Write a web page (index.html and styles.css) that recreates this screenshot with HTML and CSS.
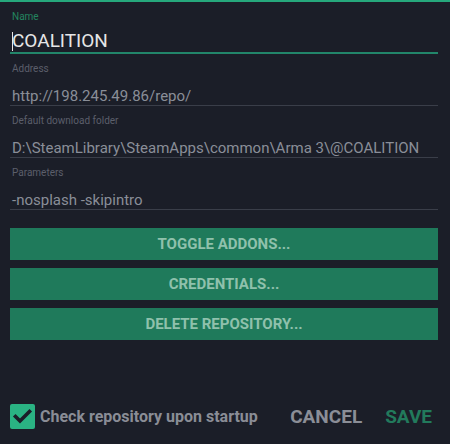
FILE: index.html
```html
<!DOCTYPE html>
<html>
<head>
<meta charset="utf-8">
<link rel="stylesheet" href="styles.css">
</head>
<body>
<div class="dialog">
  <div class="topbar"></div>
  <div class="form">
    <div class="field focused">
      <div class="label">Name</div>
      <div class="value"><span class="caret"></span>COALITION</div>
    </div>
    <div class="field">
      <div class="label">Address</div>
      <div class="value">http://198.245.49.86/repo/</div>
    </div>
    <div class="field">
      <div class="label">Default download folder</div>
      <div class="value">D:\SteamLibrary\SteamApps\common\Arma 3\@COALITION</div>
    </div>
    <div class="field">
      <div class="label">Parameters</div>
      <div class="value">-nosplash -skipintro</div>
    </div>
    <div class="buttons">
      <div class="btn">TOGGLE ADDONS...</div>
      <div class="btn">CREDENTIALS...</div>
      <div class="btn">DELETE REPOSITORY...</div>
    </div>
  </div>
  <div class="footer">
    <div class="check">
      <span class="box"><svg width="25" height="25" viewBox="0 0 25 25"><path d="M5.5 12.5 L10 17 L19.5 7.5" fill="none" stroke="#1b1e28" stroke-width="3.6" stroke-linecap="square"/></svg></span>
      <span class="check-label">Check repository upon startup</span>
    </div>
    <div class="actions">
      <span class="action cancel">CANCEL</span>
      <span class="action save">SAVE</span>
    </div>
  </div>
</div>
</body>
</html>
```
FILE: styles.css
```css
html, body {
  margin: 0;
  padding: 0;
  background: #1b1e28;
}
body {
  font-family: Roboto, "Liberation Sans", sans-serif;
  width: 450px;
  height: 444px;
  overflow: hidden;
}
.dialog {
  display: flex;
  flex-direction: column;
  height: 444px;
}
.topbar {
  height: 2px;
  background: #26a87c;
}
.form {
  padding: 0 12px 0 10px;
  display: flex;
  flex-direction: column;
}
.field {
  height: 52px;
  box-sizing: border-box;
  border-bottom: 1px solid #3a3e49;
  padding: 9px 0 0 2px;
  display: flex;
  flex-direction: column;
}
.label {
  font-size: 10px;
  line-height: 12px;
  color: #5b5f6b;
}
.value {
  font-size: 15px;
  line-height: 18px;
  margin-top: 12px;
  color: #8a8e98;
  white-space: nowrap;
}
.field.focused {
  border-bottom: 2px solid #22866a;
}
.field.focused .label {
  color: #23845f;
}
.field.focused .value {
  font-size: 19px;
  line-height: 22px;
  margin-top: 7px;
  color: #e6e6e6;
  position: relative;
}
.caret {
  position: absolute;
  left: 0;
  top: 2px;
  height: 19px;
  border-left: 1px solid #e6e6e6;
}
.buttons {
  margin-top: 18px;
  display: flex;
  flex-direction: column;
  gap: 8px;
}
.btn {
  height: 32px;
  background: #1f7a5b;
  color: #8fc1ac;
  font-weight: bold;
  font-size: 15px;
  display: flex;
  align-items: center;
  justify-content: center;
}
.footer {
  margin-top: auto;
  height: 40px;
  margin-bottom: 8px;
  padding: 0 18px 0 10px;
  display: flex;
  align-items: center;
  justify-content: space-between;
}
.check {
  display: flex;
  align-items: center;
  gap: 5px;
}
.box {
  width: 25px;
  height: 25px;
  background: #2ab383;
  border-radius: 2px;
  display: block;
}
.box svg {
  display: block;
}
.check-label {
  font-size: 16px;
  font-weight: bold;
  color: #8a8d96;
}
.actions {
  display: flex;
  gap: 23px;
}
.action {
  font-size: 19px;
  font-weight: bold;
}
.cancel {
  color: #8b8e97;
}
.save {
  color: #227a5c;
}
```
